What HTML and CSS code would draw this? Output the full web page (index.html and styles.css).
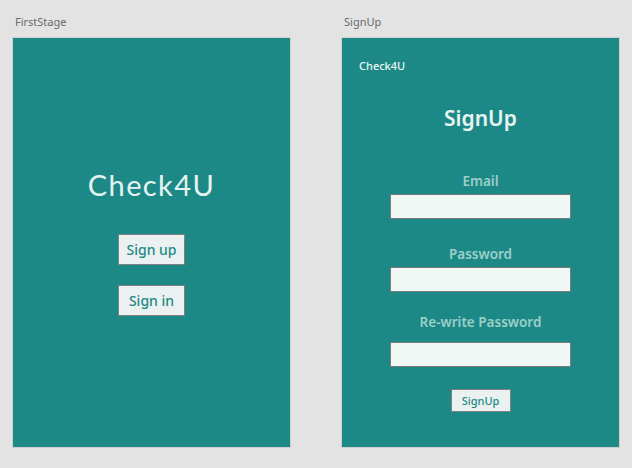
FILE: index.html
```html
<!DOCTYPE html>
<html>
<head>
<meta charset="utf-8">
<link rel="stylesheet" href="styles.css">
</head>
<body>
<div class="canvas">
  <section class="board">
    <div class="board-label">FirstStage</div>
    <div class="frame frame-first">
      <div class="brand-big">Check4U</div>
      <button class="btn btn-big btn-signup">Sign up</button>
      <button class="btn btn-big btn-signin">Sign in</button>
    </div>
  </section>
  <section class="board">
    <div class="board-label">SignUp</div>
    <div class="frame frame-signup">
      <div class="brand-small">Check4U</div>
      <div class="title">SignUp</div>
      <div class="field-label label-email">Email</div>
      <div class="input"></div>
      <div class="field-label label-pass">Password</div>
      <div class="input"></div>
      <div class="field-label label-repass">Re-write Password</div>
      <div class="input"></div>
      <button class="btn btn-small">SignUp</button>
    </div>
  </section>
</div>
</body>
</html>
```

FILE: styles.css
```css
* { box-sizing: border-box; }
html, body {
  margin: 0;
  padding: 0;
  background: #e3e3e3;
  width: 632px;
  height: 468px;
  overflow: hidden;
  font-family: "Noto Sans", "Open Sans", sans-serif;
}
.canvas {
  display: flex;
  gap: 50px;
  padding-left: 12px;
}
.board {
  display: flex;
  flex-direction: column;
  width: 279px;
}
.board-label {
  height: 37px;
  padding: 14px 0 0 3px;
  font-size: 11px;
  line-height: 16px;
  color: #6a6a6a;
}
.frame {
  height: 411px;
  border: 1px solid #cfcfcf;
  background: #1c8987;
  display: flex;
  flex-direction: column;
}
.frame-first {
  align-items: center;
  padding-top: 129px;
}
.brand-big {
  font-family: "Lato", sans-serif;
  font-weight: 400;
  font-size: 29px;
  line-height: 36px;
  color: #e6f3f1;
  letter-spacing: 1.4px;
}
.btn {
  display: flex;
  align-items: center;
  justify-content: center;
  padding: 0;
  background: #ebf1f0;
  border: 1px solid #808080;
  color: #1c8987;
  font-family: "Noto Sans", "Open Sans", sans-serif;
  font-weight: 500;
}
.btn-big {
  width: 67px;
  height: 31px;
  font-size: 14px;
}
.btn-signup { margin-top: 31px; }
.btn-signin { margin-top: 20px; }
.frame-signup {
  align-items: center;
  padding-top: 21px;
}
.brand-small {
  align-self: flex-start;
  margin-left: 17px;
  font-size: 11px;
  line-height: 14px;
  color: #eef7f5;
  font-weight: 500;
}
.title {
  margin-top: 31px;
  font-size: 21px;
  line-height: 28px;
  font-weight: 600;
  color: #e8f4f2;
}
.field-label {
  font-size: 13.5px;
  line-height: 18px;
  font-weight: 600;
  color: #9ccfc7;
}
.label-email { margin-top: 40px; }
.label-pass { margin-top: 26px; }
.label-repass { margin-top: 21px; }
.input {
  width: 181px;
  height: 25px;
  margin-top: 4px;
  background: #f0f8f6;
  border: 1px solid #7a7a7a;
}
.label-repass + .input { margin-top: 11px; }
.btn-small {
  margin-top: 22px;
  width: 60px;
  height: 23px;
  font-size: 11px;
  font-weight: 500;
}
```
